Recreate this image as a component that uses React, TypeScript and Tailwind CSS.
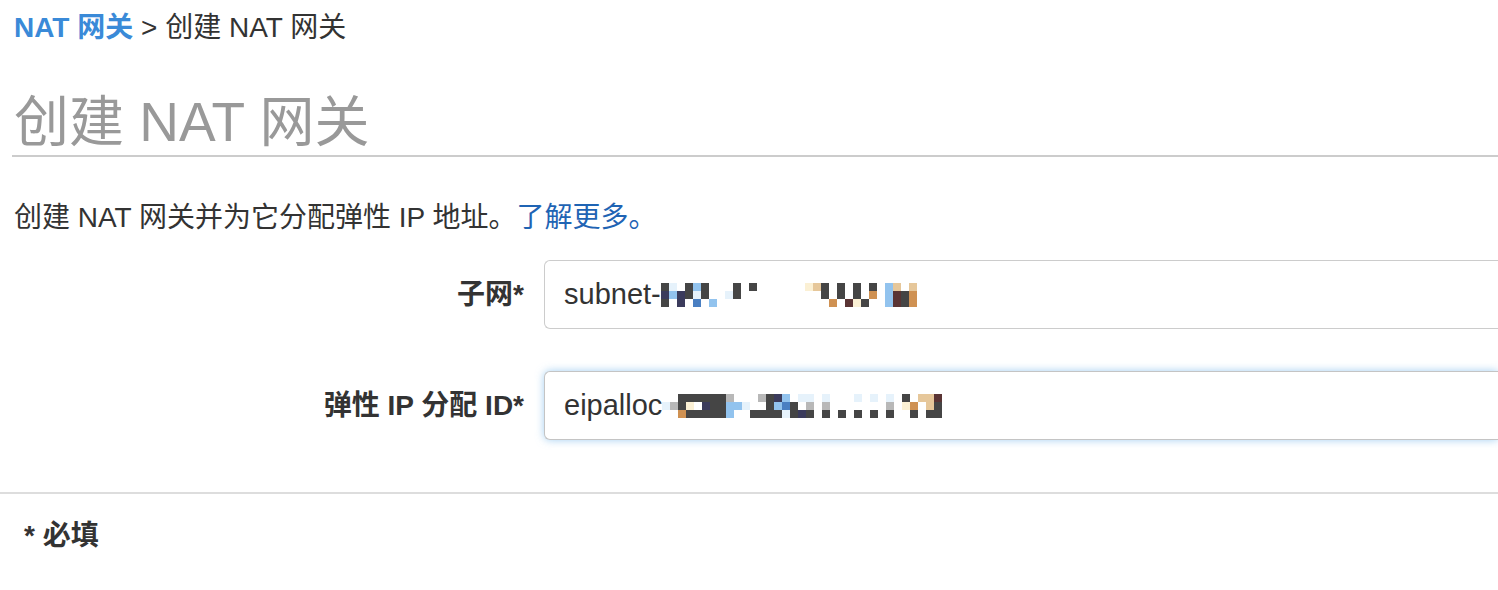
import React from 'react';

// mosaic that hides the resource ids: each column is three 8px cells (top, middle, bottom)
const palette: Record<string, string> = {
  D: '#454545',
  N: '#3b3b5c',
  B: '#4a7fc2',
  L: '#92c3ee',
  l: '#e6f2fb',
  O: '#cf9152',
  R: '#5a3434',
  Y: '#fbf0d4',
  T: '#e6c79a',
  G: '#b8b8b8',
};

const subnetMask = [
  'DND', 'lL.', '.NN', 'DD.', 'LlB', 'DD.', '..L', '...', '.l.', 'DD.', '...', 'D..',
  '...', '...', '...', '...', '...', '...', 'Y..', 'T..', 'DD.', '..O', 'DD.', '..R',
  'DDY', '..D', 'DO.', '...', 'LLL', 'TRR', '.DD', 'TOO',
];

const eipMask = [
  '.l.', '.G.', 'DDO', 'DYD', 'D.D', 'DND', 'DDD', 'DDD', 'GLL', '.L.', '.l.', '..D',
  'G.D', 'DDD', 'NLD', 'LBl', '.DD', 'l.N', 'lGD', '...', 'lGD', '...', '..D', '...',
  'l.D', '...', 'l.D', '...', 'lGD', '...', 'DY.', '.OD', 'T..', 'TTD', 'RDD',
];

function Mask({ cols }: { cols: string[] }) {
  return (
    <span className="inline-flex">
      {cols.map((col, i) => (
        <span key={i} className="flex w-[8px] flex-col">
          {col.split('').map((c, j) => (
            <span key={j} className="h-[8px]" style={{ background: palette[c] ?? 'transparent' }} />
          ))}
        </span>
      ))}
    </span>
  );
}

function Field({
  label,
  value,
  mask,
  focused = false,
}: {
  label: string;
  value: string;
  mask: string[];
  focused?: boolean;
}) {
  return (
    <div className="flex items-center">
      <label className="w-[524px] shrink-0 text-right text-[28px] font-bold leading-[34px] text-[#333]">{label}</label>
      <div
        className={`ml-[20px] flex h-[69px] flex-1 items-center rounded-l-[6px] border border-r-0 bg-white pl-[19px] text-[29px] text-[#333] ${
          focused ? 'border-[#c4c4c4] shadow-[0_0_8px_rgba(102,175,233,0.6)]' : 'border-[#cccccc]'
        }`}
      >
        <span>{value}</span>
        <Mask cols={mask} />
      </div>
    </div>
  );
}

export default function App() {
  return (
    <div className="min-h-[590px] w-full overflow-hidden bg-white font-['Liberation_Sans','Noto_Sans_CJK_SC',sans-serif] text-[#333]">
      {/* Breadcrumb */}
      <div className="pl-[14px] pt-[11px] text-[28px] leading-[34px]">
        <a className="font-bold text-[#3a8ad8]">NAT 网关</a>
        <span className="text-[#333]"> &gt; 创建 NAT 网关</span>
      </div>

      {/* Title */}
      <h1 className="ml-[12px] mt-[45px] border-b-2 border-[#cccccc] pb-[1px] pl-[2px] text-[55px] leading-[64px] text-[#999]">
        创建 NAT 网关
      </h1>

      <p className="mt-[44px] pl-[14px] text-[28px] leading-[34px] text-[#333]">
        创建 NAT 网关并为它分配弹性 IP 地址。<a className="text-[#1f64b4]">了解更多。</a>
      </p>

      <div className="mt-[25px] flex flex-col gap-[42px]">
        <Field label="子网*" value="subnet-" mask={subnetMask} />
        <Field label="弹性 IP 分配 ID*" value="eipalloc" mask={eipMask} focused />
      </div>

      <div className="mt-[52px] border-t-2 border-[#dddddd]" />

      <div className="pl-[24px] pt-[25px] text-[28px] font-bold leading-[34px] text-[#333]">* 必填</div>
    </div>
  );
}
